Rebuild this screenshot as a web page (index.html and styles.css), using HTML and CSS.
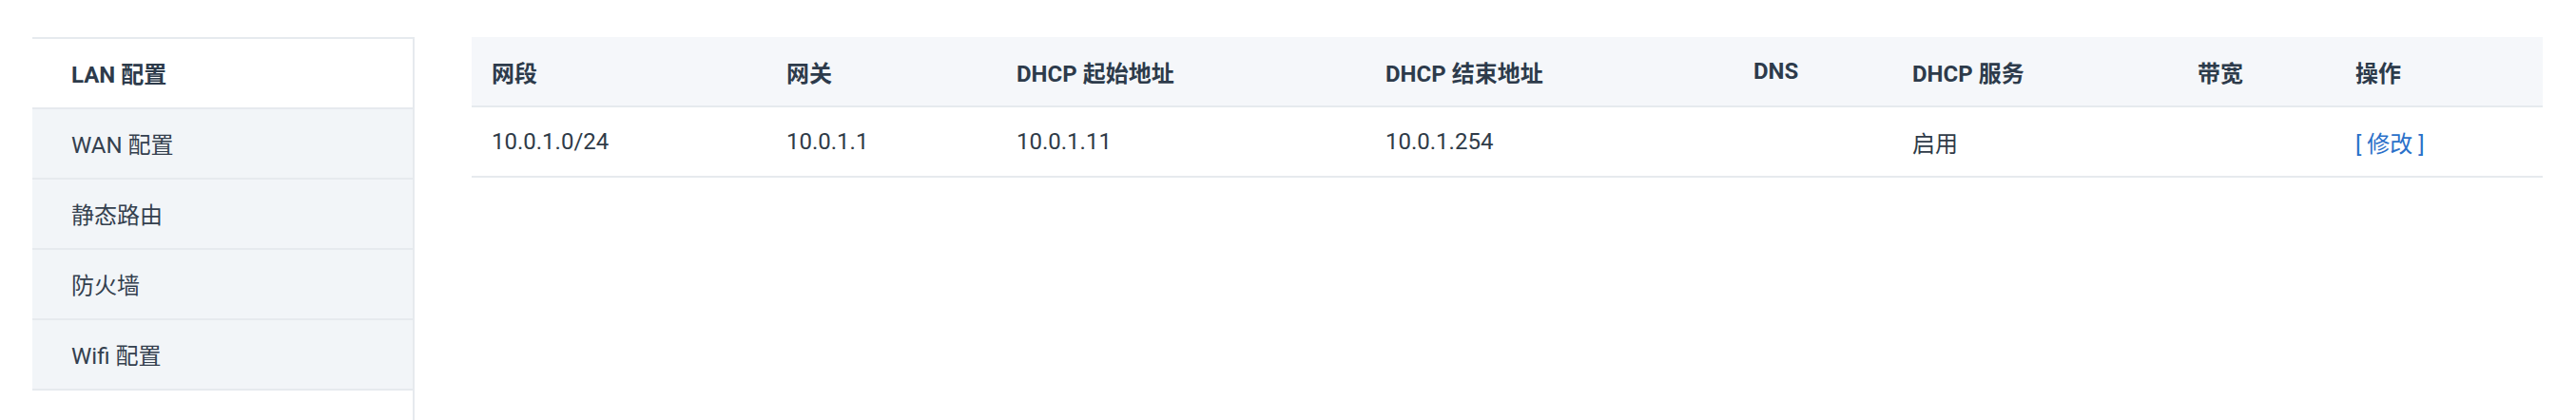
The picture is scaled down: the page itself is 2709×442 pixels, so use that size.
FILE: index.html
```html
<!DOCTYPE html>
<html lang="zh-CN">
<head>
<meta charset="utf-8">
<title>LAN 配置</title>
<link rel="stylesheet" href="styles.css">
</head>
<body>
<div class="page">
  <nav class="side">
    <div class="side-item active">LAN 配置</div>
    <div class="side-item">WAN 配置</div>
    <div class="side-item">静态路由</div>
    <div class="side-item">防火墙</div>
    <div class="side-item">Wifi 配置</div>
  </nav>
  <main class="main">
    <table class="grid">
      <colgroup>
        <col class="c1"><col class="c2"><col class="c3"><col class="c4">
        <col class="c5"><col class="c6"><col class="c7"><col class="c8">
      </colgroup>
      <thead>
        <tr>
          <th>网段</th>
          <th>网关</th>
          <th>DHCP 起始地址</th>
          <th>DHCP 结束地址</th>
          <th>DNS</th>
          <th>DHCP 服务</th>
          <th>带宽</th>
          <th>操作</th>
        </tr>
      </thead>
      <tbody>
        <tr>
          <td>10.0.1.0/24</td>
          <td>10.0.1.1</td>
          <td>10.0.1.11</td>
          <td>10.0.1.254</td>
          <td></td>
          <td>启用</td>
          <td></td>
          <td><a class="link" href="#">[ 修改 ]</a></td>
        </tr>
      </tbody>
    </table>
  </main>
</div>
</body>
</html>
```

FILE: styles.css
```css
html, body {
  margin: 0;
  padding: 0;
  background: #ffffff;
}
body {
  font-family: Roboto, "Noto Sans CJK SC", sans-serif;
  font-size: 24px;
  color: #2f3d4c;
  height: 442px;
  overflow: hidden;
}
.page {
  display: flex;
  align-items: stretch;
  padding: 39px 35px 0 34px;
  height: 442px;
  box-sizing: border-box;
  gap: 60px;
}
.side {
  width: 402px;
  flex: none;
  border-top: 2px solid #e6eaee;
  border-right: 2px solid #e6eaee;
  box-sizing: border-box;
}
.side-item {
  height: 74px;
  box-sizing: border-box;
  border-bottom: 2px solid #e6eaee;
  background: #f2f5f8;
  display: flex;
  align-items: center;
  padding: 0 0 2px 41px;
  color: #34404e;
}
.side-item.active {
  background: #ffffff;
  font-weight: 700;
  color: #2d3b4b;
}
.main {
  flex: 1;
}
.grid {
  width: 2178px;
  border-collapse: collapse;
  table-layout: fixed;
}
.c1 { width: 310px; }
.c2 { width: 242px; }
.c3 { width: 388px; }
.c4 { width: 387px; }
.c5 { width: 167px; }
.c6 { width: 300px; }
.c7 { width: 166px; }
.c8 { width: 218px; }
.grid th,
.grid td {
  height: 72px;
  padding: 0 0 0 21px;
  text-align: left;
  border-bottom: 2px solid #e6eaee;
  white-space: nowrap;
}
.grid th {
  background: #f5f7fa;
  font-weight: 700;
  color: #2d3b4b;
}
.grid td {
  font-weight: 400;
  color: #2f3b48;
}
.link {
  color: #2a70c9;
  text-decoration: none;
}
```
